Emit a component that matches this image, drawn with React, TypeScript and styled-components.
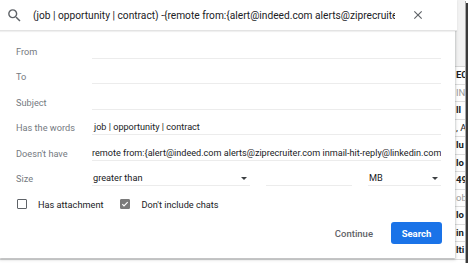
import * as React from "react";
import styled, { createGlobalStyle } from "styled-components";

const GlobalStyle = createGlobalStyle`
  html, body {
    margin: 0;
    padding: 0;
    background: #ffffff;
    font-family: Roboto, "Liberation Sans", Arial, sans-serif;
  }
`;

const Styled = {
  Screen: styled.div`
    position: relative;
    width: 465px;
    height: 263px;
    overflow: hidden;
    background: #f7f7f7;
    box-shadow: 1px 1px 0 #a8a8a8, 3px 3px 0 #3a3a3a;
  `,
  Page: styled.div`
    display: flex;
    flex-direction: column;
    height: 100%;
  `,
  PageTop: styled.div`
    height: 66px;
    flex-shrink: 0;
    background: #f2f2f2;
    border-bottom: 1px solid #d6d6d6;
  `,
  PageRow: styled.div<{ $muted?: boolean; $bold?: boolean }>`
    height: 17.5px;
    flex-shrink: 0;
    line-height: 16px;
    box-sizing: border-box;
    padding-left: 456px;
    border-bottom: 1px solid #dedede;
    background: #ffffff;
    font-size: 9.5px;
    white-space: nowrap;
    overflow: hidden;
    font-weight: ${(p) => (p.$bold ? 700 : 400)};
    color: ${(p) => (p.$muted ? "#9a9a9a" : "#202124")};
  `,
  Popup: styled.div`
    position: absolute;
    top: 0;
    left: 0;
    width: 455px;
    height: 258px;
    background: #ffffff;
    box-shadow: 0 1px 2px rgba(60, 64, 67, 0.3), 0 1px 3px 1px rgba(60, 64, 67, 0.15);
    display: flex;
    flex-direction: column;
  `,
  Header: styled.div`
    height: 30px;
    width: 457px;
    flex-shrink: 0;
    display: flex;
    align-items: center;
    background: #ffffff;
    border-bottom: 1px solid #e3e3e3;
    box-shadow: 0 1px 1px rgba(0, 0, 0, 0.06);
  `,
  SearchIcon: styled.svg`
    width: 17px;
    height: 17px;
    margin-left: 6px;
    fill: #5f6368;
    flex-shrink: 0;
  `,
  Query: styled.div`
    width: 362px;
    margin-left: 10px;
    font-size: 10.2px;
    color: #202124;
    white-space: nowrap;
    overflow: hidden;
  `,
  CloseIcon: styled.svg`
    width: 14px;
    height: 14px;
    margin-left: 16px;
    fill: #5f6368;
  `,
  Body: styled.div`
    padding: 2px 14px 0 16px;
    display: flex;
    flex-direction: column;
  `,
  Row: styled.div`
    display: grid;
    grid-template-columns: 76px 1fr;
    height: 25.5px;
    align-items: end;
  `,
  Label: styled.div`
    font-size: 9.2px;
    line-height: 14px;
    color: #757a7f;
    white-space: nowrap;
  `,
  Field: styled.div<{ $indent?: number }>`
    height: 14px;
    line-height: 14px;
    font-size: 9.1px;
    color: #202124;
    white-space: nowrap;
    overflow: hidden;
    border-bottom: 1px solid #ececec;
    padding-left: ${(p) => p.$indent ?? 0}px;
  `,
  SizeFields: styled.div`
    display: grid;
    grid-template-columns: 158px 86px 73px;
    column-gap: 16px;
  `,
  Select: styled.div`
    display: flex;
    align-items: center;
    justify-content: space-between;
    height: 14px;
    line-height: 14px;
    font-size: 9.2px;
    color: #202124;
    border-bottom: 1px solid #ececec;
    padding: 0 3px 0 1px;
  `,
  Caret: styled.span`
    width: 0;
    height: 0;
    border-left: 3px solid transparent;
    border-right: 3px solid transparent;
    border-top: 3px solid #3c4043;
  `,
  Checks: styled.div`
    height: 36px;
    display: flex;
    align-items: center;
    padding-left: 1px;
  `,
  Check: styled.label`
    display: flex;
    align-items: center;
    gap: 11px;
    margin-right: 17px;
    font-size: 9.2px;
    color: #202124;
  `,
  Box: styled.span<{ $checked?: boolean }>`
    width: 10px;
    height: 10px;
    box-sizing: border-box;
    border-radius: 1px;
    border: 1.5px solid ${(p) => (p.$checked ? "#7a7a7a" : "#5f6368")};
    background: ${(p) => (p.$checked ? "#7a7a7a" : "transparent")};
    display: flex;
    align-items: center;
    justify-content: center;
  `,
  Footer: styled.div`
    display: flex;
    justify-content: flex-end;
    align-items: center;
    gap: 4px;
    padding-right: 13px;
    margin-right: -14px;
  `,
  TextButton: styled.button`
    border: none;
    background: transparent;
    font-family: inherit;
    font-size: 9.5px;
    font-weight: 500;
    color: #5f6368;
    height: 22px;
    padding: 0 14px;
  `,
  PrimaryButton: styled.button`
    border: none;
    border-radius: 3px;
    background: #1a73e8;
    color: #ffffff;
    font-family: inherit;
    font-size: 9.5px;
    font-weight: 700;
    width: 51px;
    height: 22px;
    padding: 0;
  `,
};

const pageRows = [
  { t: "EC", bold: true },
  { t: "IN", muted: true },
  { t: "ll", bold: true },
  { t: ", A" },
  { t: "lu", bold: true },
  { t: "lo", bold: true },
  { t: "49", bold: true },
  { t: "ob", muted: true },
  { t: "lo", bold: true },
  { t: "in", bold: true },
  { t: "lti", bold: true },
  { t: "" },
];

const fields = [
  { label: "From", value: "" },
  { label: "To", value: "" },
  { label: "Subject", value: "" },
  { label: "Has the words", value: "job | opportunity | contract", indent: 2 },
  {
    label: "Doesn't have",
    value:
      "remote from:{alert@indeed.com alerts@ziprecruiter.com inmail-hit-reply@linkedin.com noreply@glassdoor.com}",
  },
];

const App = () => {
  return (
    <>
      <GlobalStyle />
      <Styled.Screen>
        <Styled.Page>
          <Styled.PageTop />
          {pageRows.map((r, i) => (
            <Styled.PageRow key={i} $bold={r.bold} $muted={r.muted}>
              {r.t}
            </Styled.PageRow>
          ))}
        </Styled.Page>
        <Styled.Popup>
          <Styled.Header>
            <Styled.SearchIcon viewBox="0 0 24 24">
              <path d="M15.5 14h-.79l-.28-.27A6.471 6.471 0 0 0 16 9.5 6.5 6.5 0 1 0 9.5 16c1.61 0 3.09-.59 4.23-1.57l.27.28v.79l5 4.99L20.49 19l-4.99-5zm-6 0C7.01 14 5 11.99 5 9.5S7.01 5 9.5 5 14 7.01 14 9.5 11.99 14 9.5 14z" />
            </Styled.SearchIcon>
            <Styled.Query>
              (job | opportunity | contract) -{"{"}remote from:{"{"}alert@indeed.com
              alerts@ziprecruiter.com inmail-hit-reply@linkedin.com
            </Styled.Query>
            <Styled.CloseIcon viewBox="0 0 24 24">
              <path d="M19 6.41L17.59 5 12 10.59 6.41 5 5 6.41 10.59 12 5 17.59 6.41 19 12 13.41 17.59 19 19 17.59 13.41 12z" />
            </Styled.CloseIcon>
          </Styled.Header>
          <Styled.Body>
            {fields.map((f) => (
              <Styled.Row key={f.label}>
                <Styled.Label>{f.label}</Styled.Label>
                <Styled.Field $indent={f.indent}>{f.value}</Styled.Field>
              </Styled.Row>
            ))}
            <Styled.Row>
              <Styled.Label>Size</Styled.Label>
              <Styled.SizeFields>
                <Styled.Select>
                  greater than
                  <Styled.Caret />
                </Styled.Select>
                <Styled.Field />
                <Styled.Select>
                  MB
                  <Styled.Caret />
                </Styled.Select>
              </Styled.SizeFields>
            </Styled.Row>
            <Styled.Checks>
              <Styled.Check>
                <Styled.Box />
                Has attachment
              </Styled.Check>
              <Styled.Check>
                <Styled.Box $checked>
                  <svg width="8" height="8" viewBox="0 0 24 24">
                    <path
                      d="M4 12.5l5 5L20 6.5"
                      stroke="#ffffff"
                      strokeWidth="3.5"
                      fill="none"
                    />
                  </svg>
                </Styled.Box>
                Don't include chats
              </Styled.Check>
            </Styled.Checks>
            <Styled.Footer>
              <Styled.TextButton>Continue</Styled.TextButton>
              <Styled.PrimaryButton>Search</Styled.PrimaryButton>
            </Styled.Footer>
          </Styled.Body>
        </Styled.Popup>
      </Styled.Screen>
    </>
  );
};

export default App;
